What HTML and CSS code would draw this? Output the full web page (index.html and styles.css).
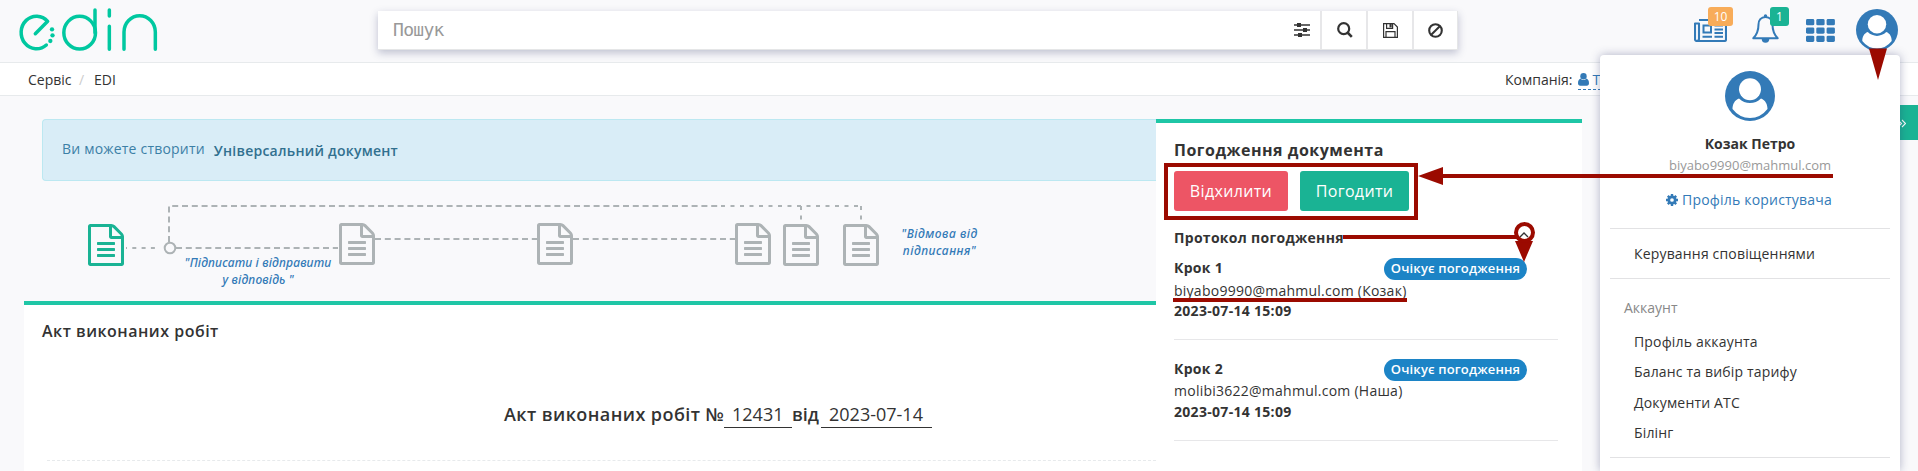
FILE: index.html
```html
<!DOCTYPE html>
<html lang="uk">
<head>
<meta charset="utf-8">
<title>EDIN</title>
<link rel="stylesheet" href="styles.css">
</head>
<body>
<svg class="sprite" width="0" height="0">
  <symbol id="file" viewBox="0 0 1536 1792"><path d="M1468 380q28 28 48 76t20 88v1152q0 40-28 68t-68 28h-1344q-40 0-68-28t-28-68v-1600q0-40 28-68t68-28h896q40 0 88 20t76 48zm-444-244v376h376q-10-29-22-41l-313-313q-12-12-41-22zm384 1528v-1024h-416q-40 0-68-28t-28-68v-416h-768v1536h1280zm-1024-864q0-14 9-23t23-9h704q14 0 23 9t9 23v64q0 14-9 23t-23 9h-704q-14 0-23-9t-9-23v-64zm736 224q14 0 23 9t9 23v64q0 14-9 23t-23 9h-704q-14 0-23-9t-9-23v-64q0-14 9-23t23-9h704zm0 256q14 0 23 9t9 23v64q0 14-9 23t-23 9h-704q-14 0-23-9t-9-23v-64q0-14 9-23t23-9h704z"/></symbol>
  <symbol id="avatar" viewBox="0 0 100 100"><circle cx="50" cy="50" r="50"/><circle class="cut" cx="50" cy="36.500" r="22"/><path class="cut" d="M28 55C19 58 15 67 15 76Q29 94 50 94T85 76C85 67 81 58 72 55C66 61 58 64 50 64S34 61 28 55Z"/></symbol>
  <symbol id="user" viewBox="0 0 11 13"><circle cx="5.500" cy="3.200" r="3.200"/><path d="M2.600 5.500C.8 6 0 8 0 10.200 0 11.800.8 12.700 2.300 12.700H8.700C10.200 12.700 11 11.800 11 10.200 11 8 10.200 6 8.400 5.500 7.500 6.700 6.600 7 5.500 7S3.500 6.700 2.600 5.500Z"/></symbol>
</svg>

<header class="topbar">
  <svg class="logo" viewBox="0 0 480 186" width="160" height="62">
    <path d="M106 101L143 64A46 49 0 1 0 139 135M285 98V30M328 30V48M328 79V148M372 148V96A47 49 0 0 1 466 96V148"/>
    <ellipse cx="239" cy="98" rx="47.500" ry="49"/>
    <g class="dots"><circle cx="156" cy="88" r="6.500"/><circle cx="157.500" cy="106" r="6.500"/><circle cx="151" cy="123" r="6.500"/></g>
  </svg>
  <div class="search">
    <span class="placeholder">Пошук</span>
    <span class="tool filter"><svg width="16" height="14" viewBox="0 0 16 14"><path fill="none" stroke="currentColor" stroke-width="1.600" d="M0 2H16M0 7H16M0 12H16"/><path d="M3 0h4v4H3zM9 5h4v4H9zM4 10h4v4H4z"/></svg></span>
    <span class="tool lens"><svg width="16" height="16" viewBox="0 0 16 16"><circle cx="6.700" cy="6.700" r="5.500" fill="none" stroke="currentColor" stroke-width="2.200"/><path d="M10.500 10.500L14.800 14.800" stroke="currentColor" stroke-width="2.600"/></svg></span>
    <span class="tool"><svg width="15" height="15" viewBox="0 0 15 15"><path fill="none" stroke="currentColor" stroke-width="1.200" d="M.6.6H11L14.400 4V14.400H.6ZM3.600.6V5.400H9.600V.6M3 14.400V8.600H12V14.400"/><path d="M6.500 1h2.200v3.400H6.500z"/></svg></span>
    <span class="tool last"><svg width="15" height="15" viewBox="0 0 15 15"><circle cx="7.500" cy="7.500" r="6.300" fill="none" stroke="currentColor" stroke-width="2.100"/><path d="M3.200 11.800L11.800 3.200" stroke="currentColor" stroke-width="2"/></svg></span>
  </div>
  <nav class="icons">
    <span class="nav-item news"><svg width="33" height="23" viewBox="0 0 33 23"><path fill="none" stroke="currentColor" stroke-width="2.100" stroke-linejoin="round" d="M5 1H32V20.500Q32 22 30.500 22H3Q1 22 1 20V4.500H5V19.500Q5 22 3 22"/><path fill="none" stroke="currentColor" stroke-width="2" d="M9.500 6.500H17V13.500H9.500ZM20.500 6.500H29M20.500 10.500H29M20.500 14H29M20.500 17.700H29M8.500 17.700H18"/></svg><b class="badge orange">10</b></span>
    <span class="nav-item bell"><svg width="27" height="30" viewBox="0 0 27 30"><path fill="none" stroke="currentColor" stroke-width="2" stroke-linejoin="round" d="M13.500 3C9 3 6.500 6.500 6.500 10.500 6.500 17.500 4.500 21 1.300 24.300H25.700C22.500 21 20.500 17.500 20.500 10.500 20.500 6.500 18 3 13.500 3Z"/><circle cx="13.500" cy="2" r="1.700"/><path d="M9.700 24.500a3.800 4.300 0 0 0 7.600 0z"/></svg><b class="badge green">1</b></span>
    <svg class="grid" width="29" height="23" viewBox="0 0 29 23"><g><rect width="8.300" height="6.300" rx="1.400"/><rect x="10.300" width="8.300" height="6.300" rx="1.400"/><rect x="20.600" width="8.300" height="6.300" rx="1.400"/><rect y="8.400" width="8.300" height="6.300" rx="1.400"/><rect x="10.300" y="8.400" width="8.300" height="6.300" rx="1.400"/><rect x="20.600" y="8.400" width="8.300" height="6.300" rx="1.400"/><rect y="16.700" width="8.300" height="6.300" rx="1.400"/><rect x="10.300" y="16.700" width="8.300" height="6.300" rx="1.400"/><rect x="20.600" y="16.700" width="8.300" height="6.300" rx="1.400"/></g></svg>
    <svg class="me" width="42" height="42"><use href="#avatar"/></svg>
  </nav>
</header>

<div class="crumbs">
  <span class="crumb">Сервіс</span><span class="slash">/</span><span>EDI</span>
  <span class="company">Компанія: <a class="company-link"><svg width="11" height="13"><use href="#user"/></svg> Тестова</a></span>
</div>

<main class="page">
  <section class="left">
    <div class="alert"><span>Ви можете створити</span><b>Універсальний документ</b></div>
    <div class="flow">
      <svg class="wires" width="900" height="120">
        <path d="M102 67H136" stroke-dasharray="4 5.300" stroke-dashoffset="3"/>
        <path d="M152 67H314M351 58H513M549 58H712" stroke-dasharray="6 3.800"/>
        <path d="M145 61V25H700" stroke-dasharray="6 3.800"/>
        <path d="M697 25H838M777 25V43M837 25V43" stroke-dasharray="4 5.500"/>
        <circle cx="146" cy="67" r="5.300"/>
      </svg>
      <svg class="node n1"><use href="#file"/></svg>
      <svg class="node n2"><use href="#file"/></svg>
      <svg class="node n3"><use href="#file"/></svg>
      <svg class="node n4"><use href="#file"/></svg>
      <svg class="node n5"><use href="#file"/></svg>
      <svg class="node n6"><use href="#file"/></svg>
      <div class="note reply">"Підписати і відправити<br>у відповідь "</div>
      <div class="note refuse">"Відмова від<br>підписання"</div>
    </div>
    <article class="doc">
      <h1>Акт виконаних робіт</h1>
      <p class="title"><b class="t1">Акт виконаних робіт №</b><span class="num">12431</span><b class="t2">від</b><span class="date">2023-07-14</span></p>
      <div class="rule"></div>
    </article>
  </section>

  <aside class="panel">
    <h2>Погодження документа</h2>
    <div class="actions"><span class="btn red">Відхилити</span><span class="btn ok">Погодити</span></div>
    <div class="protocol"><b>Протокол погодження</b><svg width="10" height="6" viewBox="0 0 10 6"><path d="M1 5L5 1L9 5" fill="none" stroke="#333" stroke-width="1.300"/></svg></div>
    <div class="step">
      <div class="step-head"><b>Крок 1</b><span class="pill">Очікує погодження</span></div>
      <div class="mail">biyabo9990@mahmul.com (Козак)</div>
      <b class="when">2023-07-14 15:09</b>
    </div>
    <div class="step">
      <div class="step-head"><b>Крок 2</b><span class="pill">Очікує погодження</span></div>
      <div class="mail">molibi3622@mahmul.com (Наша)</div>
      <b class="when">2023-07-14 15:09</b>
    </div>
  </aside>
</main>

<div class="side-tab"><svg width="8" height="9" viewBox="0 0 8 9"><path d="M0 1L3.500 4.500L0 8M4 1L7.500 4.500L4 8" fill="none" stroke="#fff" stroke-width="1.100"/></svg></div>

<div class="menu">
  <svg class="big" width="50" height="50"><use href="#avatar"/></svg>
  <b class="name">Козак Петро</b>
  <span class="email">biyabo9990@mahmul.com</span>
  <a class="profile"><svg width="12" height="12" viewBox="0 0 12 12"><circle cx="6" cy="6" r="3.200" fill="none" stroke="currentColor" stroke-width="2.700"/><path fill="none" stroke="currentColor" stroke-width="2.400" d="M6 0V3M6 9V12M0 6H3M9 6H12M1.800 1.800L3.800 3.800M8.200 8.200L10.200 10.200M10.200 1.800L8.200 3.800M1.800 10.200L3.800 8.200"/></svg><span>Профіль користувача</span></a>
  <div class="group one"><span>Керування сповіщеннями</span></div>
  <div class="group two"><em>Аккаунт</em><span>Профіль аккаунта</span><span>Баланс та вибір тарифу</span><span>Документи АТС</span><span>Білінг</span></div>
  <div class="group end"></div>
</div>

<svg class="marks" width="1918" height="471">
  <path d="M1869 48.500H1887L1878 80ZM1418 176L1443 167V185ZM1515 241H1533L1524 262Z"/>
  <path class="line" d="M1440 176H1833M1343 237H1517M1173 300H1407"/>
  <rect class="line" x="1166" y="165" width="250" height="53"/>
  <circle class="line" cx="1524.500" cy="232.500" r="8.500"/>
</svg>
</body>
</html>
```
FILE: styles.css
```css
* { box-sizing: border-box; }
body { margin: 0; width: 1918px; height: 471px; overflow: hidden; position: relative; background: #f9f9fb; color: #333; font: 14px/20px "Open Sans", "Noto Sans", sans-serif; }
svg { display: block; fill: currentColor; flex: none; }
.sprite { position: absolute; }
.cut { fill: #fff; }
.topbar { display: flex; height: 63px; border-bottom: 1px solid #e7eaec; }
.logo path, .logo ellipse { fill: none; stroke: #00c8a0; stroke-width: 10.500; stroke-linecap: round; stroke-linejoin: round; }
.logo .dots circle { fill: #00c8a0; stroke: none; }
.search { display: flex; width: 1080px; height: 39px; margin: 11px 0 0 218px; background: #fff; border: solid #e5e6e7; border-width: 0 1px 1px 0; box-shadow: 0 3px 8px rgba(40, 45, 100, .28); }
.placeholder { flex: 1; padding: 0 0 0 15px; font: 18px/37px "DejaVu Sans Mono", monospace; letter-spacing: -.7px; color: #999; }
.tool { display: flex; align-items: center; justify-content: center; width: 46px; border-right: 2px solid #e7e7e9; }
.tool.filter { width: 41px; padding-left: 2px; }
.tool.lens { padding-left: 2px; }
.tool.last { width: 43px; border: 0; }
.icons { display: flex; margin-left: 236px; color: #337ab7; }
.nav-item { position: relative; }
.news { margin-top: 19px; }
.bell { margin: 14px 0 0 25px; }
.grid { margin: 19px 0 0 27px; }
.me { margin: 9px 0 0 21px; }
.badge { position: absolute; height: 19px; border-radius: 3px; color: #fff; font-size: 12px; line-height: 19px; font-weight: 400; text-align: center; }
.orange { width: 25px; left: 14px; top: -12px; background: #f8ac59; }
.green { width: 19px; left: 18px; top: -7px; background: #1ab394; }
.crumbs { display: flex; height: 33px; padding: 7px 0 0 28px; background: #fff; border-bottom: 1px solid #e7eaec; white-space: nowrap; }
.crumb { width: 45px; }
.slash { width: 21px; padding-left: 6px; color: #ccc; }
.company { margin-left: auto; width: 413px; display: flex; gap: 5px; }
.company-link { display: flex; align-items: center; gap: 4px; height: 20px; color: #337ab7; border-bottom: 1px dashed #337ab7; }
.page { display: flex; padding: 23px 0 0 24px; }
.left { width: 1132px; }
.alert { display: flex; gap: 9px; height: 62px; margin-left: 18px; padding: 19px 0 0 19px; background: #d9edf7; border: 1px solid #bce8f1; border-right: 0; border-radius: 4px 0 0 4px; color: #31708f; letter-spacing: .2px; }
.alert span { color: #3c80a6; }
.alert b { padding-top: 2px; font-weight: 600; letter-spacing: .24px; }
.flow { position: relative; height: 120px; color: #adb3b5; }
.wires path, .wires circle { fill: none; stroke: currentColor; stroke-width: 2; }
.wires circle { fill: #f9f9fb; }
.node { position: absolute; width: 36px; height: 42px; top: 43px; }
.n1 { left: 64px; color: #1ab394; }
.n2 { left: 315px; top: 42px; }
.n3 { left: 513px; top: 42px; }
.n4 { left: 711px; top: 42px; }
.n5 { left: 759px; }
.n6 { left: 819px; }
.note { position: absolute; font-family: "Noto Sans", sans-serif; font-size: 12px; line-height: 17px; font-style: italic; font-weight: 500; color: #337ab7; text-align: center; white-space: nowrap; letter-spacing: .15px; }
.reply { left: 160px; top: 73px; width: 148px; }
.refuse { left: 877px; top: 44px; width: 77px; letter-spacing: .5px; }
.doc { height: 170px; background: #fff; border-top: 4px solid #1fc6a6; }
h1 { margin: 0; padding: 16px 0 0 18px; font-size: 16px; line-height: 20px; font-weight: 600; letter-spacing: .5px; }
.title { display: flex; height: 31px; margin: 59px 0 0 480px; font-size: 18px; line-height: 28px; white-space: nowrap; }
.title b { font-weight: 600; }
.num, .date { border-bottom: 1px solid #333; padding-left: 8px; line-height: 28px; height: 28px; }
.num { width: 68px; }
.date { width: 111px; }
.t1 { width: 220px; letter-spacing: .43px; }
.t2 { width: 29px; }
.rule { margin: 29px 0 0 23px; border-top: 1px dashed #e7eaec; }
.panel { width: 426px; height: 352px; padding: 15px 24px 0 18px; background: #fff; border-top: 4px solid #1fc6a6; letter-spacing: .25px; }
h2 { margin: 0; font-size: 16px; line-height: 24px; font-weight: 700; letter-spacing: .5px; }
.actions { display: flex; gap: 12px; margin-top: 9px; }
.btn { width: 114px; height: 40px; border-radius: 3px; color: #fff; font-size: 16px; line-height: 40px; text-align: center; letter-spacing: .35px; }
.red { background: #ed5565; }
.ok { width: 109px; background: #1ab394; }
.protocol { display: flex; justify-content: space-between; align-items: center; height: 20px; margin: 17px 29px 0 0; }
.protocol svg { margin-bottom: 6px; }
.protocol b, .step b { font-weight: 700; letter-spacing: .3px; }
.step { height: 82px; margin-top: 19px; border-bottom: 1px solid #e7e7e9; }
.protocol + .step { margin-top: 10px; }
.step-head { display: flex; justify-content: space-between; align-items: center; height: 22px; margin-right: 31px; }
.step .step-head b { padding-bottom: 2px; }
.pill { width: 143px; height: 22px; border-radius: 11px; background: #1c84c6; color: #fff; font-size: 13px; line-height: 21px; font-weight: 600; text-align: center; white-space: nowrap; letter-spacing: .15px; }
.mail { height: 21px; line-height: 20px; }
.protocol + .step .mail { line-height: 22px; }
.when { display: block; line-height: 20px; }
.side-tab { position: absolute; right: 0; top: 105px; width: 20px; height: 35px; padding-top: 14px; background: #1ab394; }
.menu { position: absolute; left: 1600px; top: 55px; width: 300px; height: 416px; padding: 16px 10px 0; display: flex; flex-direction: column; background: #fff; border-radius: 4px 4px 0 0; box-shadow: 0 0 10px rgba(40, 45, 100, .35); }
.big { align-self: center; color: #337ab7; }
.name { margin-top: 13px; text-align: center; }
.email { margin-top: 2px; text-align: center; font-size: 13px; line-height: 18px; color: #999; }
.profile { display: flex; align-items: center; justify-content: center; gap: 4px; margin: 16px 2px 18px 0; height: 20px; color: #337ab7; white-space: nowrap; letter-spacing: .2px; }
.group { display: flex; flex-direction: column; border-top: 1px solid #e2e2e4; }
.group span { padding-left: 24px; height: 30.400px; line-height: 20px; letter-spacing: .17px; }
.one { height: 50px; padding-top: 15px; }
.two { height: 179px; padding-top: 19px; }
.group em { height: 34px; padding-left: 14px; font-style: normal; color: #888; }
.marks { position: absolute; left: 0; top: 0; fill: #9b0a00; pointer-events: none; }
.line { fill: none; stroke: #9b0a00; stroke-width: 4; }
```
